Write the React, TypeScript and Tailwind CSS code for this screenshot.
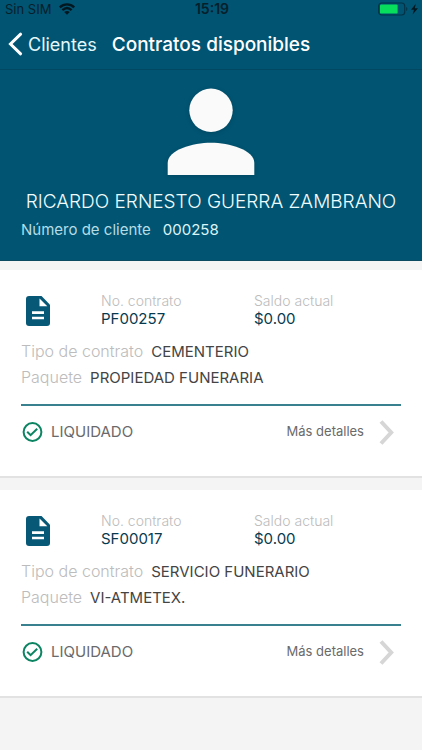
type Contrato = {
  numero: string;
  saldo: string;
  tipo: string;
  paquete: string;
  estado: string;
};

const contratos: Contrato[] = [
  { numero: 'PF00257', saldo: '$0.00', tipo: 'CEMENTERIO', paquete: 'PROPIEDAD FUNERARIA', estado: 'LIQUIDADO' },
  { numero: 'SF00017', saldo: '$0.00', tipo: 'SERVICIO FUNERARIO', paquete: 'VI-ATMETEX.', estado: 'LIQUIDADO' },
];

function StatusBar() {
  return (
    <div className="grid grid-cols-3 items-center h-[18px] pl-[5px] pr-[3px] text-[13px] leading-[18px] text-[#06202b]">
      <div className="flex items-center gap-2">
        <span>Sin SIM</span>
        <svg width="16" height="12" viewBox="0 0 16 12" fill="none" stroke="#021820" strokeWidth="2.4">
          <path d="M.8 4.4C5 .4 11 .4 15.2 4.4" />
          <path d="M3.4 7.2C6.2 4.6 9.8 4.6 12.6 7.2" />
          <path d="M8 11.8 5.2 9C6.9 7.6 9.1 7.6 10.8 9Z" fill="#021820" stroke="none" />
        </svg>
      </div>
      <span className="text-center text-sm leading-[18px] font-semibold">15:19</span>
      <div className="flex items-center justify-end">
        <svg width="41" height="14" viewBox="0 0 41 14">
          <rect x=".7" y="1" width="26" height="12" rx="3" fill="none" stroke="#033347" strokeWidth="1.2" />
          <rect x="2" y="2.4" width="17.6" height="9.2" rx="1.2" fill="#06de5c" />
          <path d="M28.2 5c1.6.6 1.6 3.4 0 4z" fill="#033347" />
          <path d="M37.8 1.8 33 7.8h3L34.6 12.4 40 6.2h-3.2z" fill="#021820" />
        </svg>
      </div>
    </div>
  );
}

function NavBar() {
  return (
    <nav className="flex items-center h-[52px] pl-2 gap-[15px] border-b border-[#024862] text-lg text-white">
      <a href="#clientes" className="flex items-center gap-[5px] text-[#e4f8fb]">
        <svg width="15" height="24" viewBox="0 0 15 24" fill="none" stroke="#fff" strokeWidth="3" strokeLinecap="round">
          <path d="M12.6 2.2 2.5 12 12.6 21.8" />
        </svg>
        <span className="pt-0.5">Clientes</span>
      </a>
      <h1 className="pt-0.5 text-[19px] leading-7 font-medium whitespace-nowrap">Contratos disponibles</h1>
    </nav>
  );
}

function Perfil() {
  return (
    <section className="flex flex-col pt-[18px] pb-4 border-b border-[#0b4a60]">
      <svg width="88" height="90" viewBox="0 0 88 90" className="self-center drop-shadow-sm" fill="#fafafa">
        <circle cx="44" cy="22.3" r="21.7" />
        <path d="M.7 87V75C.7 62 26 54.8 44 54.8S87.3 62 87.3 75v12z" />
      </svg>
      <h2 className="mt-3 text-center text-[19px] leading-6 font-light text-[#f0fdff]">RICARDO ERNESTO GUERRA ZAMBRANO</h2>
      <p className="flex gap-3 mt-0.5 px-[21px] text-[15px] leading-7">
        <span className="text-[#b5dde5]">Número de cliente</span>
        <span className="text-[#dcf5f9]">000258</span>
      </p>
    </section>
  );
}

function ContratoCard({ contrato }: { contrato: Contrato }) {
  return (
    <article className="bg-white border-b-2 border-[#e2e2e2] px-[21px] pt-[22px] pb-[18px]">
      <div className="flex">
        <div className="w-20 pl-[5px] pt-1">
          <svg width="24" height="30" viewBox="0 0 24 30">
            <path d="M3 0h12.5L24 8.7V27a3 3 0 0 1-3 3H3a3 3 0 0 1-3-3V3a3 3 0 0 1 3-3z" fill="#075877" />
            <path d="M13.5 2.5v7.8h7.8zM6 15.3h12v2.6H6zM6 20.7h12v2.6H6z" fill="#fff" />
          </svg>
        </div>
        <dl className="flex flex-1">
          <div className="w-[153px]">
            <dt className="text-sm leading-[18px] font-light text-[#bcbcbc]">No. contrato</dt>
            <dd className="text-[15px] leading-[18px] text-[#073a4e]">{contrato.numero}</dd>
          </div>
          <div>
            <dt className="text-sm leading-[18px] font-light text-[#bcbcbc]">Saldo actual</dt>
            <dd className="text-[15px] leading-[18px] text-[#073a4e]">{contrato.saldo}</dd>
          </div>
        </dl>
      </div>
      <dl className="mt-[10px] text-[#444]">
        <div className="flex items-baseline gap-2 h-[26px]">
          <dt className="text-base leading-[26px] font-light text-[#bcbcbc]">Tipo de contrato</dt>
          <dd className="text-[15px] leading-6">{contrato.tipo}</dd>
        </div>
        <div className="flex items-baseline gap-2 h-[26px]">
          <dt className="text-base leading-[26px] font-light text-[#bcbcbc]">Paquete</dt>
          <dd className="text-[15px] leading-6">{contrato.paquete}</dd>
        </div>
      </dl>
      <div className="flex items-center justify-between h-[54px] mt-[14px] border-t-2 border-[#39818f] text-[#6a6a6a]">
        <p className="flex items-center gap-2 pl-px text-[15px]">
          <svg width="21" height="21" viewBox="0 0 21 21" fill="none" stroke="#0c8462" strokeWidth="2">
            <circle cx="10.5" cy="10" r="8.9" />
            <path d="m5.2 9.7 3.4 3.5 6.6-6.5" />
          </svg>
          {contrato.estado}
        </p>
        <a href={`#${contrato.numero}`} className="flex items-center gap-[14px] pr-1.5 text-[13px]">
          Más detalles
          <svg width="17" height="26" viewBox="0 0 17 26" fill="none" stroke="#d6d6d6" strokeWidth="4">
            <path d="M3 2.5 13.2 13.5 3 24.5" />
          </svg>
        </a>
      </div>
    </article>
  );
}

export default function App() {
  return (
    <div className="min-h-screen bg-[#f4f4f4] font-['Inter','Liberation_Sans',sans-serif]">
      <header className="bg-[#015472]">
        <StatusBar />
        <NavBar />
        <Perfil />
      </header>
      <main className="flex flex-col gap-3 pt-[9px]">
        {contratos.map((contrato) => (
          <ContratoCard key={contrato.numero} contrato={contrato} />
        ))}
      </main>
    </div>
  );
}
